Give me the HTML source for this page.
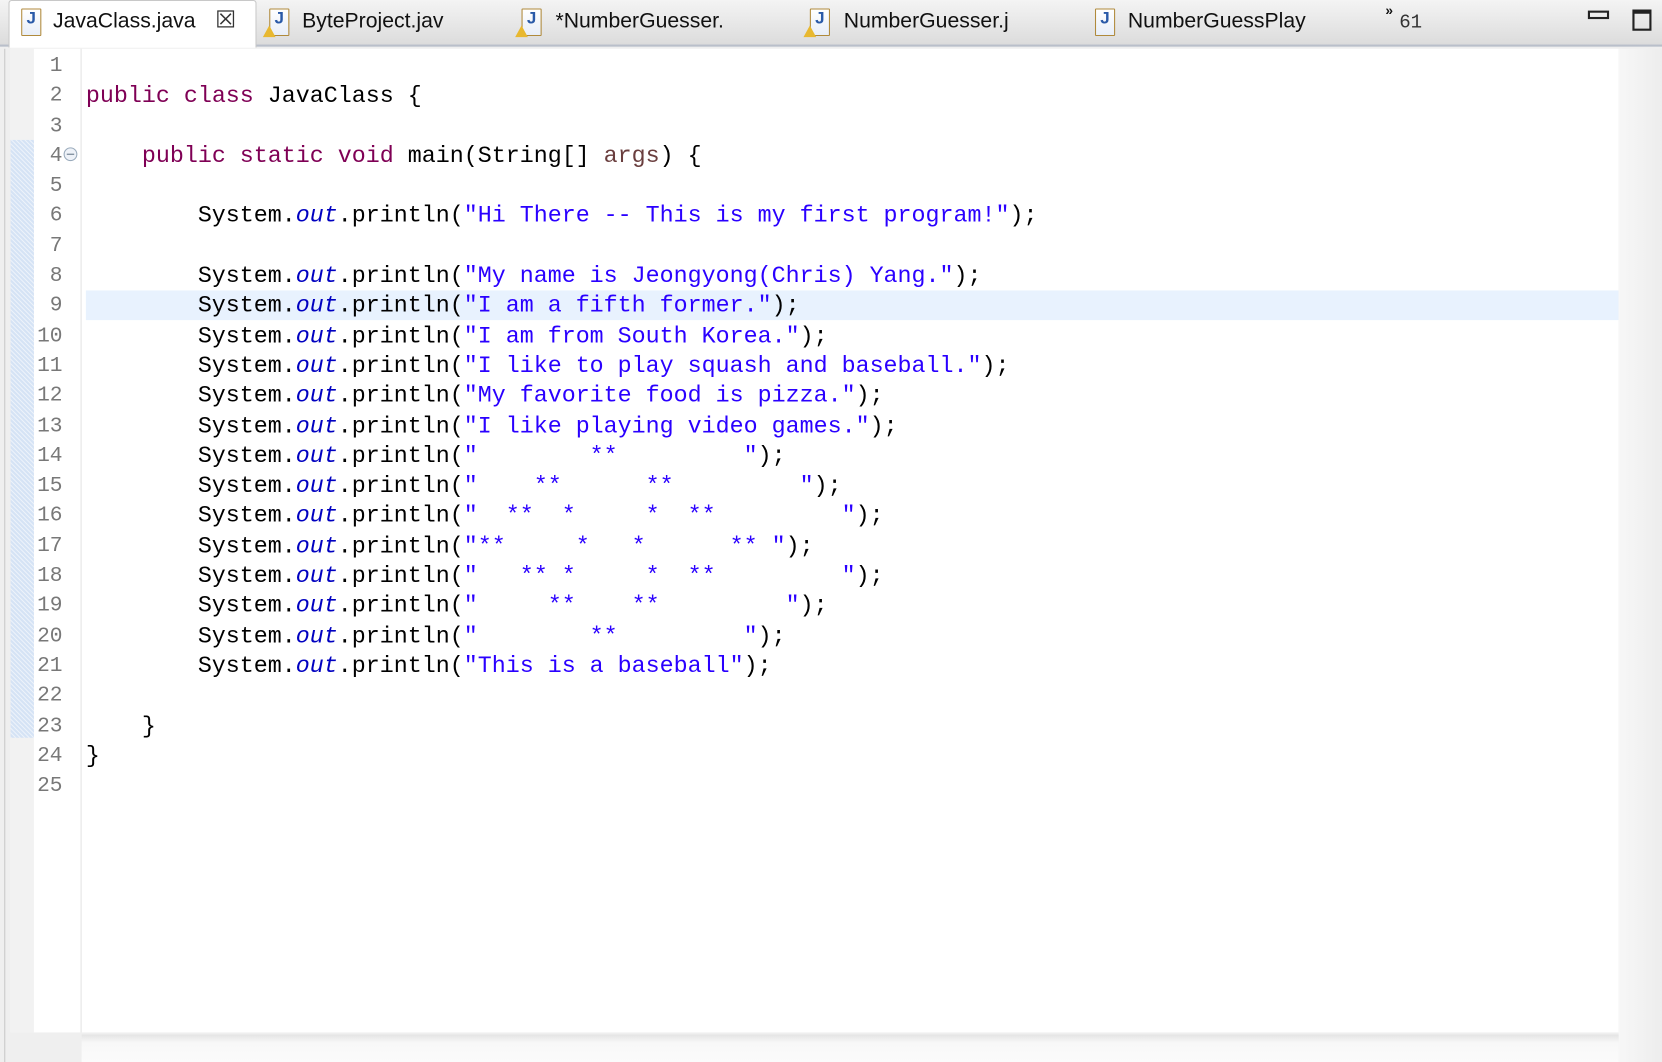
<!DOCTYPE html>
<html><head><meta charset="utf-8">
<style>
html,body{margin:0;padding:0;width:1662px;height:1062px;overflow:hidden;background:#efefef;}
#root{position:absolute;left:0;top:0;width:1568px;height:1002px;transform:scale(1.06);transform-origin:0 0;background:#efefef;font-family:"Liberation Sans",sans-serif;}
.tabbar{position:absolute;left:0;top:0;width:1568px;height:42px;background:linear-gradient(#f4f4f4,#dcdcdc);border-bottom:2px solid #b9bfca;}
.tab{position:absolute;top:9px;font-size:20px;color:#111;white-space:nowrap;}
.active{position:absolute;left:8px;top:0;width:232px;height:44px;background:#fff;border:1px solid #c8c8c8;border-bottom:none;border-radius:3px 3px 0 0;}
.ic{position:absolute;top:8px;width:17px;height:24px;border:1px solid #b08a3c;background:linear-gradient(#fff,#e8eef8);border-radius:1px;}
.ic:after{content:"J";position:absolute;left:4px;top:0;font:bold 16px "Liberation Sans",sans-serif;color:#2a5aa8;}
.warn{position:absolute;top:24px;width:0;height:0;border-left:6px solid transparent;border-right:6px solid transparent;border-bottom:11px solid #e8b830;}
.editor{position:absolute;left:10px;top:46px;width:1517px;height:928px;background:#fff;}
.lside{position:absolute;left:0;top:0;width:22px;height:928px;background:#f2f2f2;}
.hatch{position:absolute;left:0;top:86px;width:22px;height:564px;background-color:#d5e3f5;background-image:repeating-linear-gradient(45deg,rgba(255,255,255,.55) 0 1px,transparent 1px 3px);}
.gutline{position:absolute;left:66px;top:0;width:1px;height:928px;background:#e4e4e4;}
.nums{position:absolute;left:18px;top:3px;width:31px;text-align:right;font-family:"Liberation Mono",monospace;font-size:20px;line-height:28.3px;color:#787878;}
.code{position:absolute;left:71px;top:3px;font-family:"Liberation Mono",monospace;font-size:22px;line-height:28.3px;color:#000;white-space:pre;}
.hl{position:absolute;left:71px;top:227.5px;width:1446px;height:28.3px;background:#e8f2fe;}
.k{color:#7f0055}.s{color:#2a00ff}.o{color:#0000c0;font-style:italic}.a{color:#6a3e3e}
.bottomstrip{position:absolute;left:77px;top:976px;width:1450px;height:26px;background:linear-gradient(#e4e4e4,#f8f8f8 30%,#fbfbfb);}
.rside{position:absolute;left:1527px;top:46px;width:41px;height:956px;background:linear-gradient(90deg,#f7f7f7,#ededed);}
</style></head><body><div id="root">
<div class="tabbar">
 <div class="active"></div>
 <div class="ic" style="left:20px"></div><div class="tab" style="left:50px">JavaClass.java</div>
 <div class="tab" style="left:203px;font-size:22px;top:6px;color:#333">&#x2612;</div>
 <div class="ic" style="left:254px"></div><div class="warn" style="left:248px"></div><div class="tab" style="left:285px">ByteProject.jav</div>
 <div class="ic" style="left:492px"></div><div class="warn" style="left:486px"></div><div class="tab" style="left:524px">*NumberGuesser.</div>
 <div class="ic" style="left:764px"></div><div class="warn" style="left:758px"></div><div class="tab" style="left:796px">NumberGuesser.j</div>
 <div class="ic" style="left:1033px"></div><div class="tab" style="left:1064px">NumberGuessPlay</div>
 <div class="tab" style="left:1307px;top:2px;font-size:13px;font-weight:bold">&raquo;</div>
 <div class="tab" style="left:1320px;top:12px;font-family:'Liberation Mono',monospace;font-size:18px;color:#333">61</div>
 <div style="position:absolute;left:1498px;top:10px;width:16px;height:4px;border:2px solid #222"></div>
 <div style="position:absolute;left:1540px;top:9px;width:14px;height:14px;border:2px solid #222;border-top-width:4px"></div>
</div>
<div class="editor">
 <div class="lside"></div><div class="hatch"></div><div class="gutline"></div>
 <div class="hl"></div>
 <div class="nums">1<br>2<br>3<br>4<br>5<br>6<br>7<br>8<br>9<br>10<br>11<br>12<br>13<br>14<br>15<br>16<br>17<br>18<br>19<br>20<br>21<br>22<br>23<br>24<br>25</div>
 <div style="position:absolute;left:50px;top:93px;width:11px;height:11px;border:1px solid #9ab;border-radius:50%;background:#eef2f8"><div style="position:absolute;left:2px;top:5px;width:7px;height:1px;background:#678"></div></div>
 <div class="code">
<span class="k">public</span> <span class="k">class</span> JavaClass {

    <span class="k">public</span> <span class="k">static</span> <span class="k">void</span> main(String[] <span class="a">args</span>) {

        System.<span class="o">out</span>.println(<span class="s">"Hi There -- This is my first program!"</span>);

        System.<span class="o">out</span>.println(<span class="s">"My name is Jeongyong(Chris) Yang."</span>);
        System.<span class="o">out</span>.println(<span class="s">"I am a fifth former."</span>);
        System.<span class="o">out</span>.println(<span class="s">"I am from South Korea."</span>);
        System.<span class="o">out</span>.println(<span class="s">"I like to play squash and baseball."</span>);
        System.<span class="o">out</span>.println(<span class="s">"My favorite food is pizza."</span>);
        System.<span class="o">out</span>.println(<span class="s">"I like playing video games."</span>);
        System.<span class="o">out</span>.println(<span class="s">"        **         "</span>);
        System.<span class="o">out</span>.println(<span class="s">"    **      **         "</span>);
        System.<span class="o">out</span>.println(<span class="s">"  **  *     *  **         "</span>);
        System.<span class="o">out</span>.println(<span class="s">"**     *   *      ** "</span>);
        System.<span class="o">out</span>.println(<span class="s">"   ** *     *  **         "</span>);
        System.<span class="o">out</span>.println(<span class="s">"     **    **         "</span>);
        System.<span class="o">out</span>.println(<span class="s">"        **         "</span>);
        System.<span class="o">out</span>.println(<span class="s">"This is a baseball"</span>);

    }
}
</div>
</div>
<div class="rside"></div>
<div class="bottomstrip"></div>
<div style="position:absolute;left:4px;top:46px;width:1px;height:956px;background:#c8c8c8"></div>
</div></body></html>
